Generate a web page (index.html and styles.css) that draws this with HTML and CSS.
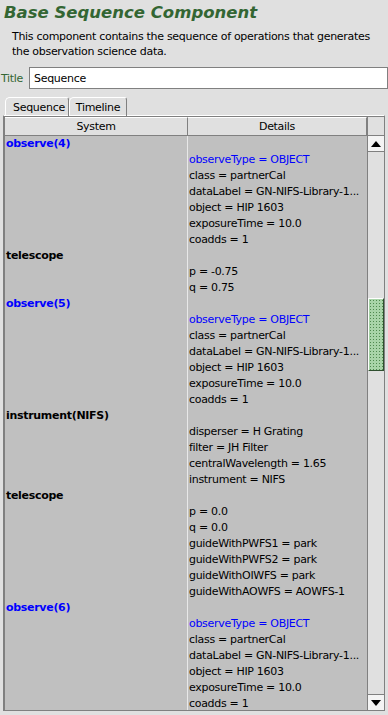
FILE: index.html
```html
<!DOCTYPE html>
<html>
<head>
    <link rel="stylesheet" href="styles.css">
</head>
<body>
    <h1 class="heading">Base Sequence Component</h1>
    <p class="desc">This component contains the sequence of operations that generates the observation science data.</p>
    <div class="title-row">
        <label class="title-label">Title</label>
        <input type="text" class="title-input" value="Sequence">
    </div>
    <div class="tabs">
        <div class="tab tab-active">Sequence</div>
        <div class="tab">Timeline</div>
    </div>
    <div class="panel">
        <div class="table">
            <div class="head">
                <div class="head-cell">System</div>
                <div class="head-cell">Details</div>
            </div>
            <div class="body">
                <div class="row"><span class="sys obs">observe(4)</span><span></span></div>
                <div class="row"><span></span><span class="blue">observeType = OBJECT</span></div>
                <div class="row"><span></span><span>class = partnerCal</span></div>
                <div class="row"><span></span><span>dataLabel = GN-NIFS-Library-1...</span></div>
                <div class="row"><span></span><span>object = HIP 1603</span></div>
                <div class="row"><span></span><span>exposureTime = 10.0</span></div>
                <div class="row"><span></span><span>coadds = 1</span></div>
                <div class="row"><span class="sys">telescope</span><span></span></div>
                <div class="row"><span></span><span>p = -0.75</span></div>
                <div class="row"><span></span><span>q = 0.75</span></div>
                <div class="row"><span class="sys obs">observe(5)</span><span></span></div>
                <div class="row"><span></span><span class="blue">observeType = OBJECT</span></div>
                <div class="row"><span></span><span>class = partnerCal</span></div>
                <div class="row"><span></span><span>dataLabel = GN-NIFS-Library-1...</span></div>
                <div class="row"><span></span><span>object = HIP 1603</span></div>
                <div class="row"><span></span><span>exposureTime = 10.0</span></div>
                <div class="row"><span></span><span>coadds = 1</span></div>
                <div class="row"><span class="sys">instrument(NIFS)</span><span></span></div>
                <div class="row"><span></span><span>disperser = H Grating</span></div>
                <div class="row"><span></span><span>filter = JH Filter</span></div>
                <div class="row"><span></span><span>centralWavelength = 1.65</span></div>
                <div class="row"><span></span><span>instrument = NIFS</span></div>
                <div class="row"><span class="sys">telescope</span><span></span></div>
                <div class="row"><span></span><span>p = 0.0</span></div>
                <div class="row"><span></span><span>q = 0.0</span></div>
                <div class="row"><span></span><span>guideWithPWFS1 = park</span></div>
                <div class="row"><span></span><span>guideWithPWFS2 = park</span></div>
                <div class="row"><span></span><span>guideWithOIWFS = park</span></div>
                <div class="row"><span></span><span>guideWithAOWFS = AOWFS-1</span></div>
                <div class="row"><span class="sys obs">observe(6)</span><span></span></div>
                <div class="row"><span></span><span class="blue">observeType = OBJECT</span></div>
                <div class="row"><span></span><span>class = partnerCal</span></div>
                <div class="row"><span></span><span>dataLabel = GN-NIFS-Library-1...</span></div>
                <div class="row"><span></span><span>object = HIP 1603</span></div>
                <div class="row"><span></span><span>exposureTime = 10.0</span></div>
                <div class="row"><span></span><span>coadds = 1</span></div>
            </div>
        </div>
        <div class="scroll-col">
            <div class="corner"></div>
            <div class="scrollbar">
                <div class="arrow-btn"><svg width="10" height="6" viewBox="0 0 10 6"><polygon points="0,6 10,6 5,0" fill="#000"/></svg></div>
                <div class="track">
                    <div class="thumb"></div>
                </div>
                <div class="arrow-btn"><svg width="10" height="6" viewBox="0 0 10 6"><polygon points="0,0 10,0 5,6" fill="#000"/></svg></div>
            </div>
        </div>
    </div>
</body>
</html>
```

FILE: styles.css
```css
body {
    margin: 0;
    background-color: #e0e0e0;
    font-family: "DejaVu Sans", sans-serif;
    font-size: 11px;
    letter-spacing: -0.3px;
    color: #000;
    width: 388px;
    height: 715px;
    overflow: hidden;
}

.heading {
    margin: 0;
    padding: 0 0 0 4px;
    height: 29px;
    line-height: 25px;
    font-size: 16.5px;
    font-style: italic;
    font-weight: bold;
    letter-spacing: 0;
    color: #336633;
}

.desc {
    margin: 0;
    padding: 0 10px 0 12px;
    line-height: 15px;
    color: #000;
}

.title-row {
    display: flex;
    align-items: center;
    margin-top: 8px;
    height: 22px;
}

.title-label {
    width: 29px;
    padding-left: 1px;
    box-sizing: border-box;
    color: #336633;
}

.title-input {
    width: 359px;
    height: 22px;
    box-sizing: border-box;
    margin: 0;
    padding: 0 4px;
    border: 1px solid #808080;
    background-color: #fff;
    font-family: "DejaVu Sans", sans-serif;
    font-size: 11px;
    letter-spacing: -0.3px;
}

.tabs {
    display: flex;
    margin-top: 7px;
    padding-left: 5px;
    height: 19px;
}

.tab {
    height: 18px;
    line-height: 19px;
    padding: 0 6px 0 6px;
    border: 1px solid #fff;
    border-bottom: none;
    border-right-color: #808080;
    border-top-left-radius: 5px;
    border-top-right-radius: 3px;
    margin-top: 1px;
}

.tab-active {
    padding-left: 7px;
    padding-right: 3px;
}

.panel {
    display: flex;
    margin-left: 3px;
    width: 382px;
    height: 596px;
    border: 1px solid #808080;
    border-top-color: #fff;
    box-sizing: border-box;
}

.table {
    flex: 1;
    display: flex;
    flex-direction: column;
    border-left: 1px solid #808080;
    border-top: 1px solid #808080;
}

.head {
    display: grid;
    grid-template-columns: 183px 1fr;
    height: 19px;
    border-bottom: 1px solid #808080;
    box-sizing: border-box;
}

.head-cell {
    text-align: center;
    line-height: 17px;
    border-right: 1px solid #808080;
    border-top: 1px solid #fff;
}

.body {
    flex: 1;
    overflow: hidden;
    background-color: #c0c0c0;
}

.row {
    display: grid;
    grid-template-columns: 183px 1fr;
    height: 16px;
    line-height: 16px;
}

.row span {
    white-space: nowrap;
    overflow: hidden;
}

.row span:first-child {
    border-right: 1px solid #e8e8e8;
    padding-left: 1px;
}

.row span:last-child {
    padding-left: 1px;
}

.sys {
    font-weight: bold;
}

.obs, .blue {
    color: #0000ff;
}

.scroll-col {
    width: 17px;
    display: flex;
    flex-direction: column;
    border-top: 1px solid #808080;
}

.corner {
    height: 19px;
    box-sizing: border-box;
    border-bottom: 1px solid #808080;
    border-left: 1px solid #808080;
}

.scrollbar {
    flex: 1;
    display: flex;
    flex-direction: column;
    border-left: 1px solid #808080;
}

.arrow-btn {
    height: 16px;
    display: flex;
    align-items: center;
    justify-content: center;
    background-color: #f4f4f4;
    border-bottom: 1px solid #808080;
    box-sizing: border-box;
}

.arrow-btn:last-child {
    border-bottom: none;
    border-top: 1px solid #808080;
}

.track {
    flex: 1;
    position: relative;
    background-color: #e0e0e0;
}

.thumb {
    position: absolute;
    left: 0;
    right: 0;
    top: 146px;
    height: 73px;
    box-sizing: border-box;
    border: 1px solid #2f4f2f;
    border-top-color: #fff;
    border-left-color: #fff;
    background-color: #a8d4a8;
    background-image: radial-gradient(circle, #4f8a4f 0.8px, transparent 1px);
    background-size: 3px 3px;
}
```
